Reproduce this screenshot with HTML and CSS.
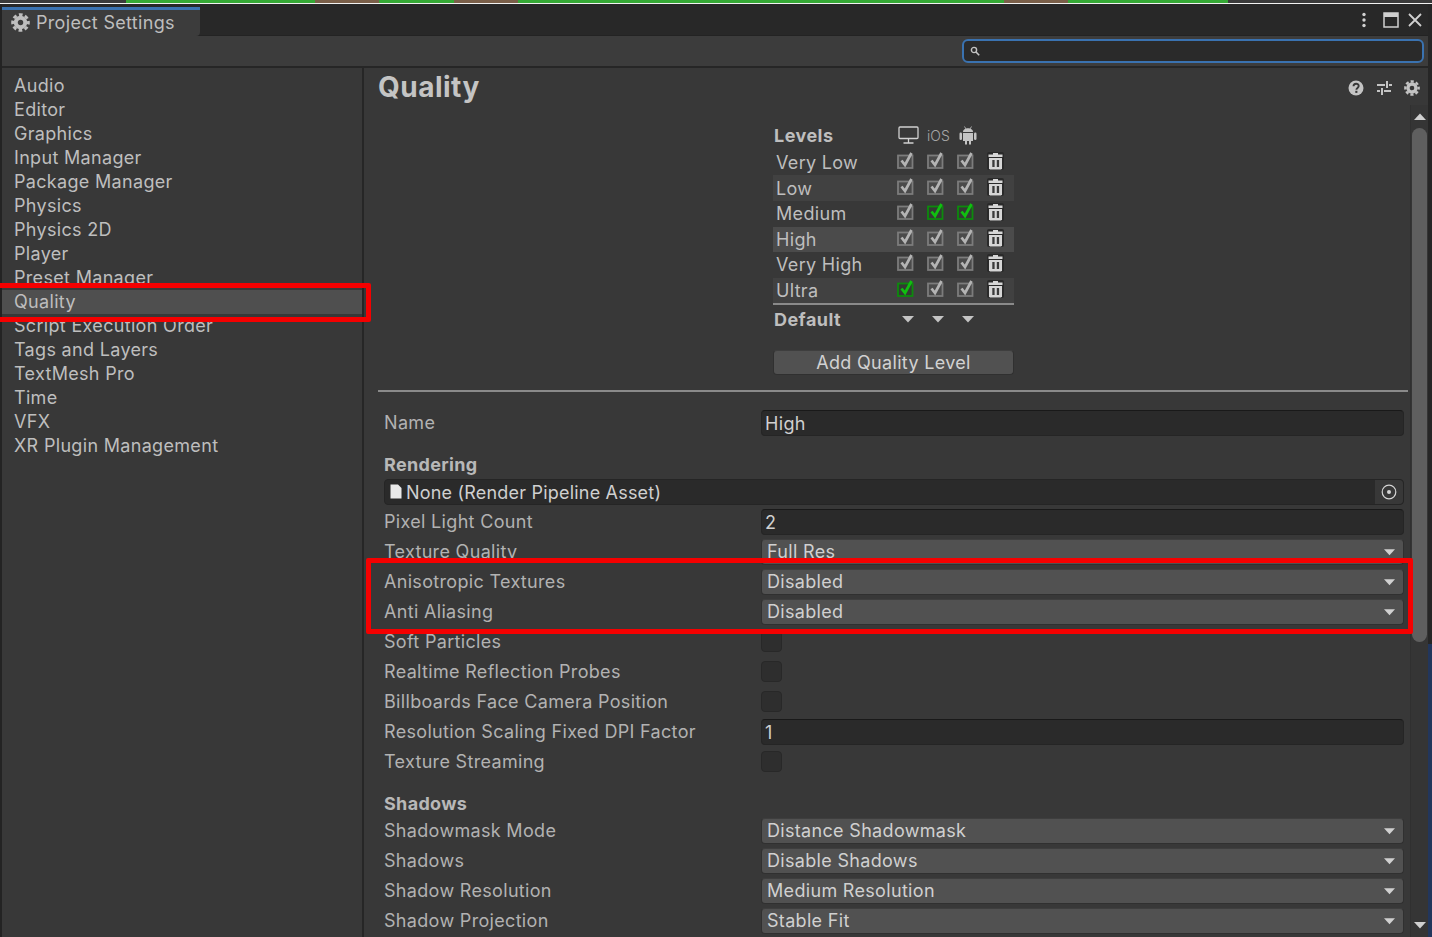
FILE: index.html
```html
<!DOCTYPE html>
<html lang="en">
<head>
<meta charset="utf-8">
<title>Project Settings</title>
<link rel="stylesheet" href="styles.css">
</head>
<body>
<svg class="defs" width="0" height="0" aria-hidden="true">
  <symbol id="gear" viewBox="0 0 20 20">
    <circle cx="10" cy="10" r="5" fill="none" stroke="currentColor" stroke-width="4.200"/>
    <circle cx="10" cy="10" r="8.300" fill="none" stroke="currentColor" stroke-width="3" stroke-dasharray="3.900 2.620" stroke-dashoffset="1.950"/>
  </symbol>
  <symbol id="check" viewBox="0 0 17 18">
    <rect x="1" y="4.500" width="14.500" height="12.500" fill="#4a4a4a" stroke="#7c7c7c" stroke-width="1.800"/>
    <path d="M4.500 9.500 L8 14 L14.500 2" fill="none" stroke="#b4b4b4" stroke-width="2.700"/>
  </symbol>
  <symbol id="checkg" viewBox="0 0 17 18">
    <rect x="1" y="4.500" width="14.500" height="12.500" fill="#333a33" stroke="#0d8a0d" stroke-width="1.800"/>
    <path d="M4.500 9.500 L8 14 L14.500 2" fill="none" stroke="#10c010" stroke-width="2.800"/>
  </symbol>
  <symbol id="trash" viewBox="0 0 17 18">
    <rect x="0" y="0" width="17" height="18" rx="2" fill="#2a2a2a"/>
    <path d="M6 1h5v1.500h4.500v2.500h-14v-2.500h4.500z" fill="#d6d6d6"/>
    <path d="M2 6h13v10.500l-1 1h-11l-1-1z" fill="#d6d6d6"/>
    <path d="M5.300 8h2.300v7h-2.300zM9.800 8h2.300v7h-2.300z" fill="#3a3a3a"/>
  </symbol>
  <symbol id="caret" viewBox="0 0 12 8"><path d="M0 1h12l-6 6.500z" fill="currentColor"/></symbol>
</svg>

<div class="strip"></div>
<div class="window">
  <div class="tabbar">
    <div class="tab">
      <svg class="tab-gear"><use href="#gear"/></svg>
      <span>Project Settings</span>
    </div>
    <div class="win-actions">
      <svg class="kebab" viewBox="0 0 6 16"><circle cx="3" cy="2.500" r="1.700"/><circle cx="3" cy="8" r="1.700"/><circle cx="3" cy="13.500" r="1.700"/></svg>
      <svg class="maxi" viewBox="0 0 16 16"><path d="M1 1h14v14h-14z" fill="none" stroke="currentColor" stroke-width="1.500"/><path d="M1 1h14v4h-14z" fill="currentColor"/></svg>
      <svg class="close" viewBox="0 0 14 14"><path d="M1 1l12 12M13 1l-12 12" stroke="currentColor" stroke-width="1.800" fill="none"/></svg>
    </div>
  </div>
  <div class="toolbar">
    <div class="search">
      <svg class="search-icon" viewBox="0 0 10 10"><circle cx="4" cy="4" r="2.600" fill="none" stroke="currentColor" stroke-width="1.400"/><path d="M6 6l3.200 3.200" stroke="currentColor" stroke-width="1.600"/></svg>
    </div>
  </div>
  <div class="panes">
    <nav class="sidebar">
      <div class="nav-item">Audio</div>
      <div class="nav-item">Editor</div>
      <div class="nav-item">Graphics</div>
      <div class="nav-item">Input Manager</div>
      <div class="nav-item">Package Manager</div>
      <div class="nav-item">Physics</div>
      <div class="nav-item">Physics 2D</div>
      <div class="nav-item">Player</div>
      <div class="nav-item">Preset Manager</div>
      <div class="nav-item selected">Quality</div>
      <div class="nav-item">Script Execution Order</div>
      <div class="nav-item">Tags and Layers</div>
      <div class="nav-item">TextMesh Pro</div>
      <div class="nav-item">Time</div>
      <div class="nav-item">VFX</div>
      <div class="nav-item">XR Plugin Management</div>
    </nav>
    <main class="main">
      <header class="title-row">
        <h1 class="title">Quality</h1>
        <div class="title-icons">
          <svg class="ti" viewBox="0 0 16 16"><circle cx="8" cy="8" r="7.500" fill="currentColor"/><path d="M5.500 6.200c0-3.300 5.200-3.300 5.200-.2 0 1.900-2.300 1.900-2.300 3.700" fill="none" stroke="#383838" stroke-width="1.900"/><rect x="7.300" y="10.800" width="2.100" height="2.100" fill="#383838"/></svg>
          <svg class="ti" viewBox="0 0 16 16"><path d="M1 5h8M13 5h3M1 11h3M8 11h7M11 1v7M6 8v7" stroke="currentColor" stroke-width="2" fill="none"/></svg>
          <svg class="ti"><use href="#gear"/></svg>
        </div>
      </header>
      <div class="scroller">
        <div class="content">
          <section class="levels">
            <div class="lv-head">
              <span class="lv-name lv-bold">Levels</span>
              <svg class="pf-desktop" viewBox="0 0 21 18"><rect x="1" y="1" width="19" height="11.500" rx="1" fill="none" stroke="currentColor" stroke-width="1.300"/><path d="M10.500 13v3.500M5.500 17h10" stroke="currentColor" stroke-width="1.300"/></svg>
              <span class="pf-ios">iOS</span>
              <svg class="pf-android" viewBox="0 0 18 20"><path d="M4 7c0-5 10-5 10 0z" fill="currentColor"/><path d="M5.500 1.500l1.500 2.500M12.500 1.500l-1.500 2.500" stroke="currentColor" stroke-width=".8"/><path d="M4 8h10v8h-2v3.500h-2v-3.500h-2v3.500h-2v-3.500h-2z" fill="currentColor"/><rect x="0.500" y="7.500" width="2.500" height="7.500" rx="1.200" fill="currentColor"/><rect x="15" y="7.500" width="2.500" height="7.500" rx="1.200" fill="currentColor"/></svg>
            </div>
            <div class="lv-row"><span class="lv-name">Very Low</span><svg class="cb"><use href="#check"/></svg><svg class="cb"><use href="#check"/></svg><svg class="cb"><use href="#check"/></svg><svg class="trash"><use href="#trash"/></svg></div>
            <div class="lv-row odd"><span class="lv-name">Low</span><svg class="cb"><use href="#check"/></svg><svg class="cb"><use href="#check"/></svg><svg class="cb"><use href="#check"/></svg><svg class="trash"><use href="#trash"/></svg></div>
            <div class="lv-row"><span class="lv-name">Medium</span><svg class="cb"><use href="#check"/></svg><svg class="cb"><use href="#checkg"/></svg><svg class="cb"><use href="#checkg"/></svg><svg class="trash"><use href="#trash"/></svg></div>
            <div class="lv-row active"><span class="lv-name">High</span><svg class="cb"><use href="#check"/></svg><svg class="cb"><use href="#check"/></svg><svg class="cb"><use href="#check"/></svg><svg class="trash"><use href="#trash"/></svg></div>
            <div class="lv-row"><span class="lv-name">Very High</span><svg class="cb"><use href="#check"/></svg><svg class="cb"><use href="#check"/></svg><svg class="cb"><use href="#check"/></svg><svg class="trash"><use href="#trash"/></svg></div>
            <div class="lv-row odd"><span class="lv-name">Ultra</span><svg class="cb"><use href="#checkg"/></svg><svg class="cb"><use href="#check"/></svg><svg class="cb"><use href="#check"/></svg><svg class="trash"><use href="#trash"/></svg></div>
            <div class="lv-default">
              <span class="lv-name lv-bold">Default</span>
              <svg class="lv-caret"><use href="#caret"/></svg>
              <svg class="lv-caret"><use href="#caret"/></svg>
              <svg class="lv-caret"><use href="#caret"/></svg>
            </div>
            <div class="add-btn">Add Quality Level</div>
          </section>
          <hr class="divider">
          <div class="form">
            <div class="row"><span class="label">Name</span><div class="input">High</div></div>
            <div class="heading first">Rendering</div>
            <div class="object-field">
              <svg class="doc" viewBox="0 0 12 15"><path d="M0.500 0.500h7.500l3.500 3.500v10.500h-11z" fill="#eaeaea"/></svg>
              <span class="object-name">None (Render Pipeline Asset)</span>
              <div class="picker"><svg viewBox="0 0 16 16"><circle cx="8" cy="8" r="6.800" fill="none" stroke="currentColor" stroke-width="1.200"/><circle cx="8" cy="8" r="2" fill="currentColor"/></svg></div>
            </div>
            <div class="row"><span class="label">Pixel Light Count</span><div class="input">2</div></div>
            <div class="row"><span class="label">Texture Quality</span><div class="select"><span>Full Res</span><svg class="sel-caret"><use href="#caret"/></svg></div></div>
            <div class="row"><span class="label">Anisotropic Textures</span><div class="select"><span>Disabled</span><svg class="sel-caret"><use href="#caret"/></svg></div></div>
            <div class="row"><span class="label">Anti Aliasing</span><div class="select"><span>Disabled</span><svg class="sel-caret"><use href="#caret"/></svg></div></div>
            <div class="row"><span class="label">Soft Particles</span><div class="toggle"></div></div>
            <div class="row"><span class="label">Realtime Reflection Probes</span><div class="toggle"></div></div>
            <div class="row"><span class="label">Billboards Face Camera Position</span><div class="toggle"></div></div>
            <div class="row"><span class="label">Resolution Scaling Fixed DPI Factor</span><div class="input">1</div></div>
            <div class="row"><span class="label">Texture Streaming</span><div class="toggle"></div></div>
            <div class="heading second">Shadows</div>
            <div class="row"><span class="label">Shadowmask Mode</span><div class="select"><span>Distance Shadowmask</span><svg class="sel-caret"><use href="#caret"/></svg></div></div>
            <div class="row"><span class="label">Shadows</span><div class="select"><span>Disable Shadows</span><svg class="sel-caret"><use href="#caret"/></svg></div></div>
            <div class="row"><span class="label">Shadow Resolution</span><div class="select"><span>Medium Resolution</span><svg class="sel-caret"><use href="#caret"/></svg></div></div>
            <div class="row"><span class="label">Shadow Projection</span><div class="select"><span>Stable Fit</span><svg class="sel-caret"><use href="#caret"/></svg></div></div>
          </div>
        </div>
        <div class="scrollbar">
          <svg class="sb-arrow up"><use href="#caret"/></svg>
          <div class="sb-track"><div class="sb-thumb"></div></div>
          <svg class="sb-arrow"><use href="#caret"/></svg>
        </div>
      </div>
    </main>
  </div>
</div>
<div class="edge"></div>
<div class="mark mark-nav"></div>
<div class="mark mark-form"></div>
</body>
</html>
```

FILE: styles.css
```css
* { box-sizing: border-box; }
html, body { margin: 0; height: 937px; overflow: hidden; }
body {
  position: relative;
  background: #232323;
  color: #bebebe;
  font-family: Inter, "Noto Sans", sans-serif;
  font-size: 18px;
  letter-spacing: .32px;
}
.defs { position: absolute; }
svg { display: block; }

.strip {
  height: 4px;
  border-bottom: 1px solid #f2f2f2;
  background: linear-gradient(90deg, #3a3a3a 0 126px, #35a935 126px 315px, #7a5f49 315px 379px, #35a935 379px 454px, #7a5f49 454px 518px, #35a935 518px 1004px, #7a5f49 1004px 1068px, #35a935 1068px 1228px, #3a3a3a 1228px);
}
.window { margin-left: 2px; width: 1426px; height: 933px; display: flex; flex-direction: column; background: #383838; }

.tabbar { height: 32px; background: #282828; display: flex; justify-content: space-between; border-bottom: 1px solid #232323; }
.tab {
  width: 198px; margin-top: 3px; height: 29px;
  background: #3c3c3c; border-top: 3px solid #3a72b0; border-bottom-right-radius: 4px;
  display: flex; align-items: center; padding: 0 0 2px 9px; gap: 6px; color: #bebebe;
}
.tab-gear { width: 19px; height: 19px; }
.win-actions { display: flex; align-items: center; color: #d0d0d0; padding-right: 6px; }
.kebab { width: 6px; height: 16px; fill: #d0d0d0; margin-right: 16px; }
.maxi { width: 16px; height: 16px; margin-right: 9px; }
.close { width: 14px; height: 14px; }

.toolbar { height: 32px; background: #3c3c3c; border-bottom: 2px solid #262626; display: flex; justify-content: flex-end; align-items: center; padding-right: 4px; }
.search { width: 462px; height: 24px; background: #2a2a2a; border: 2px solid #3a72b0; border-radius: 6px; display: flex; align-items: center; padding-left: 6px; color: #c4c4c4; }
.search-icon { width: 10px; height: 10px; }

.panes { flex: 1; display: flex; min-height: 0; }
.sidebar { width: 360px; padding-top: 6px; border-right: 2px solid #262626; flex: none; background: #383838; box-sizing: content-box; }
.nav-item { height: 24px; line-height: 24px; padding-left: 12px; }
.nav-item.selected { background: #4f4f4f; }

.main { flex: 1; min-width: 0; display: flex; flex-direction: column; }
.title-row { height: 37px; flex: none; display: flex; justify-content: space-between; align-items: center; padding: 0 8px 0 14px; }
.title { margin: 0; font-size: 28px; font-weight: 700; letter-spacing: .5px; color: #c4c4c4; }
.title-icons { display: flex; gap: 12px; color: #c4c4c4; padding-top: 2px; }
.ti { width: 16px; height: 16px; }

.scroller { flex: 1; min-height: 0; display: flex; }
.content { flex: 1; min-width: 0; overflow: hidden; }
.scrollbar { width: 18px; flex: none; display: flex; flex-direction: column; align-items: center; background: #353535; border-left: 1px solid #303030; }
.sb-arrow { width: 12px; height: 8px; margin: 8px 0; color: #d0d0d0; flex: none; }
.sb-arrow.up { transform: scaleY(-1); margin-bottom: 0; }
.sb-track { flex: 1; width: 100%; padding: 7px 1px 0 1px; }
.sb-thumb { height: 514px; border-radius: 8px; background: #5f5f5f; }

.levels { margin: 18px 0 0 409px; width: 241px; }
.lv-head { height: 26.8px; display: flex; align-items: center; padding-bottom: 2px; }
.lv-row { height: 25.6px; display: flex; align-items: center; padding-left: 3px; }
.lv-row.odd { background: #414141; }
.lv-row.active { background: #4b4b4b; }
.lv-name { width: 121px; flex: none; }
.lv-bold { font-weight: 700; width: 125px; padding-left: 1px; letter-spacing: .45px; }
.cb { width: 17px; height: 18px; margin: -5px 13px 0 0; flex: none; }
.trash { width: 17px; height: 18px; flex: none; margin-top: -3px; }
.pf-desktop { width: 21px; height: 18px; color: #d0d0d0; margin-right: 8px; }
.pf-ios { font-size: 14px; width: 32px; color: #a6a6a6; letter-spacing: 0; font-weight: 300; }
.pf-android { width: 18px; height: 20px; color: #c4c4c4; }
.lv-default { height: 30px; display: flex; align-items: center; border-top: 2px solid #8a8a8a; }
.lv-caret { width: 12px; height: 8px; margin-right: 18px; color: #c4c4c4; }
.lv-default .lv-name { margin-right: 4px; }
.add-btn { margin-top: 17px; height: 25px; line-height: 24px; text-align: center; background: #515151; border-radius: 4px; border: 1px solid #303030; border-top-color: #3e3e3e; color: #d2d2d2; }
.divider { margin: 15px 0 15.6px 14px; height: 2px; border: 0; background: #8a8a8a; width: 1030px; }

.form { padding: 0 6px 0 20px; }
.row { height: 30px; display: flex; align-items: center; }
.label { width: 377px; flex: none; color: #b2b2b2; }
.input { flex: 1; height: 26px; line-height: 26px; background: #2a2a2a; border-radius: 4px; border: 1px solid #252525; border-top-color: #191919; padding-left: 3px; color: #d0d0d0; }
.select { flex: 1; height: 26px; display: flex; align-items: center; justify-content: space-between; background: #515151; border-radius: 4px; border: 1px solid #303030; border-top-color: #3e3e3e; padding: 0 8px 0 5px; color: #d0d0d0; }
.sel-caret { width: 11px; height: 8px; color: #d0d0d0; }
.toggle { width: 21px; height: 21px; background: #2e2e2e; border-radius: 4px; border: 1px solid #282828; }
.heading { height: 29px; line-height: 30px; font-weight: 700; color: #b8b8b8; }
.heading.first { margin-top: 12px; }
.heading.second { margin-top: 12px; height: 27px; }
.object-field { height: 26px; margin-bottom: 2px; display: flex; align-items: center; background: #2a2a2a; border-radius: 4px; border: 1px solid #252525; padding-left: 5px; color: #d0d0d0; }
.object-name { padding-top: 2px; letter-spacing: .2px; }
.doc { width: 12px; height: 15px; margin-right: 4px; }
.picker { margin-left: auto; width: 28px; height: 100%; background: #383838; border-radius: 0 4px 4px 0; display: flex; align-items: center; justify-content: center; color: #d6d6d6; }
.picker svg { width: 16px; height: 16px; }

.edge { position: absolute; right: 0; top: 4px; width: 4px; bottom: 0; background: linear-gradient(180deg, #262626 0 640px, #22365c 640px); }
.mark { position: absolute; border: 5px solid #f50000; border-radius: 2px; pointer-events: none; }
.mark-nav { left: -6px; top: 283px; width: 377px; height: 39px; }
.mark-form { left: 366px; top: 558px; width: 1047px; height: 76px; }
```
